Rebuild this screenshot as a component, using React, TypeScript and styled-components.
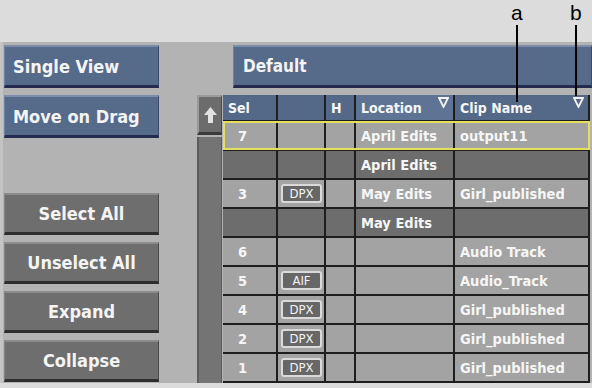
import styled, { createGlobalStyle } from 'styled-components'

const GlobalStyle = createGlobalStyle`
  html, body {
    margin: 0;
    padding: 0;
  }
  body {
    background: #dcdcdc;
    overflow: hidden;
    font-family: "DejaVu Sans Condensed", "DejaVu Sans", sans-serif;
  }
`

const Screen = styled.div`
  position: relative;
  width: 592px;
  height: 388px;
  padding-top: 42px;
  box-sizing: border-box;
  background: #dcdcdc;
`

const Panel = styled.div`
  height: 341px;
  box-sizing: border-box;
  background: #b3b3b3;
  border-left: 3px solid #c4c4c4;
  padding: 3px 0 0 1px;
  display: grid;
  grid-template-columns: 155px 1fr;
  column-gap: 38px;
  overflow: hidden;
`

const LeftColumn = styled.div`
  display: flex;
  flex-direction: column;
  gap: 7px;
`

const BlueButton = styled.div`
  height: 43px;
  box-sizing: border-box;
  background: #566a8a;
  border-top: 2px solid #7b8dab;
  border-left: 1px solid #6f82a1;
  border-right: 1px solid #3c4969;
  border-bottom: 3px solid #252a50;
  color: #f4f4f4;
  font-size: 18px;
  font-weight: bold;
  display: flex;
  align-items: center;
  padding-left: 8px;
  white-space: nowrap;
`

const GrayButton = styled.div<{ $first?: boolean }>`
  height: 42px;
  box-sizing: border-box;
  margin-top: ${(p) => (p.$first ? '48px' : '0')};
  background: #6e6e6e;
  border-top: 2px solid #8c8c8c;
  border-left: 1px solid #838383;
  border-right: 1px solid #4a4a4a;
  border-bottom: 3px solid #2e2e2e;
  color: #f4f4f4;
  font-size: 18px;
  font-weight: bold;
  display: flex;
  align-items: center;
  justify-content: center;
`

const RightColumn = styled.div`
  display: flex;
  flex-direction: column;
  gap: 7px;
  min-width: 0;
`

const TitleBar = styled(BlueButton)`
  margin-left: 36px;
  padding-left: 9px;
  font-size: 17px;
`

const ListArea = styled.div`
  display: flex;
  flex: 1;
  min-height: 0;
`

const ScrollColumn = styled.div`
  width: 25px;
  display: flex;
  flex-direction: column;
  gap: 2px;
`

const UpButton = styled.div`
  height: 40px;
  box-sizing: border-box;
  background: #6c6c6c;
  border-top: 2px solid #9a9a9a;
  border-left: 2px solid #9a9a9a;
  border-bottom: 3px solid #3a3a3a;
  border-right: 1px solid #4a4a4a;
  display: flex;
  align-items: center;
  justify-content: center;
`

const Track = styled.div`
  flex: 1;
  background: #747474;
  border-left: 2px solid #5c5c5c;
  border-right: 1px solid #5c5c5c;
`

const Table = styled.div`
  margin-left: 1px;
  display: flex;
  flex-direction: column;
  gap: 2px;
  background: #1e1e1e;
  align-self: flex-start;
  padding: 0 2px 2px 0;
`

const Row = styled.div<{ $selected?: boolean }>`
  position: relative;
  display: grid;
  grid-template-columns: 53px 46px 28px 97px 133px;
  column-gap: 2px;
  height: 27px;
  &::after {
    content: '';
    display: ${(p) => (p.$selected ? 'block' : 'none')};
    position: absolute;
    top: -1px;
    left: 0;
    right: -2px;
    bottom: -1px;
    border: 2px solid #e4df5c;
    pointer-events: none;
  }
`

const HeaderRow = styled(Row)`
  height: 25px;
`

const HeadCell = styled.div<{ $light?: boolean }>`
  background: ${(p) => (p.$light ? '#5f7495' : '#546988')};
  color: #f6f6f6;
  font-size: 14px;
  font-weight: bold;
  display: flex;
  align-items: center;
  padding-left: 5px;
  padding-right: 4px;
  white-space: nowrap;
`

const Sort = styled.svg`
  align-self: flex-start;
  margin-top: 2px;
  margin-left: auto;
  flex-shrink: 0;
`

const Cell = styled.div<{ $dark?: boolean; $pad?: number }>`
  background: ${(p) => (p.$dark ? '#6d6d6d' : '#a3a3a3')};
  color: #f6f6f6;
  font-size: 14.5px;
  font-weight: bold;
  display: flex;
  align-items: center;
  padding-left: ${(p) => p.$pad ?? 5}px;
  white-space: nowrap;
  overflow: hidden;
`

const Badge = styled.span`
  width: 41px;
  height: 19px;
  box-sizing: border-box;
  border: 2px solid #dadada;
  border-radius: 3px;
  background: #676767;
  color: #f4f4f4;
  font-size: 13px;
  font-weight: normal;
  display: flex;
  align-items: center;
  justify-content: center;
`

const Callout = styled.div<{ $x: number; $y: number }>`
  position: absolute;
  top: ${(p) => p.$y}px;
  left: ${(p) => p.$x}px;
  font-family: "Liberation Sans", Arial, sans-serif;
  font-size: 21px;
  color: #000;
  line-height: 24px;
`

const Leader = styled.div<{ $x: number; $h: number }>`
  position: absolute;
  top: 25px;
  left: ${(p) => p.$x}px;
  width: 2px;
  height: ${(p) => p.$h}px;
  background: #000;
`

type Clip = {
  sel: string
  fmt?: string
  location: string
  name: string
  dark?: boolean
  selected?: boolean
}

const clips: Clip[] = [
  { sel: '7', location: 'April Edits', name: 'output11', selected: true },
  { sel: '', location: 'April Edits', name: '', dark: true },
  { sel: '3', fmt: 'DPX', location: 'May Edits', name: 'Girl_published' },
  { sel: '', location: 'May Edits', name: '', dark: true },
  { sel: '6', location: '', name: 'Audio Track' },
  { sel: '5', fmt: 'AIF', location: '', name: 'Audio_Track' },
  { sel: '4', fmt: 'DPX', location: '', name: 'Girl_published' },
  { sel: '2', fmt: 'DPX', location: '', name: 'Girl_published' },
  { sel: '1', fmt: 'DPX', location: '', name: 'Girl_published' },
]

const SortIcon = () => (
  <Sort width="11" height="11" viewBox="0 0 11 11">
    <polygon points="1,1 10,1 5.5,10" fill="none" stroke="#f4f4f4" strokeWidth="1.8" />
  </Sort>
)

const App = () => {
  return (
    <Screen>
      <GlobalStyle />
      <Panel>
        <LeftColumn>
          <BlueButton>Single View</BlueButton>
          <BlueButton>Move on Drag</BlueButton>
          <GrayButton $first>Select All</GrayButton>
          <GrayButton>Unselect All</GrayButton>
          <GrayButton>Expand</GrayButton>
          <GrayButton>Collapse</GrayButton>
        </LeftColumn>
        <RightColumn>
          <TitleBar>Default</TitleBar>
          <ListArea>
            <ScrollColumn>
              <UpButton>
                <svg width="13" height="16" viewBox="0 0 13 16">
                  <polygon points="6.5,0 13,8 9,8 9,16 4,16 4,8 0,8" fill="#e2e2e2" />
                </svg>
              </UpButton>
              <Track />
            </ScrollColumn>
            <Table>
              <HeaderRow>
                <HeadCell>Sel</HeadCell>
                <HeadCell />
                <HeadCell>H</HeadCell>
                <HeadCell $light>
                  Location
                  <SortIcon />
                </HeadCell>
                <HeadCell>
                  Clip Name
                  <SortIcon />
                </HeadCell>
              </HeaderRow>
              {clips.map((c, i) => (
                <Row key={i} $selected={c.selected}>
                  <Cell $dark={c.dark} $pad={15}>{c.sel}</Cell>
                  <Cell $dark={c.dark} $pad={3}>{c.fmt && <Badge>{c.fmt}</Badge>}</Cell>
                  <Cell $dark={c.dark} />
                  <Cell $dark={c.dark}>{c.location}</Cell>
                  <Cell $dark={c.dark}>{c.name}</Cell>
                </Row>
              ))}
            </Table>
          </ListArea>
        </RightColumn>
      </Panel>
      <Callout $x={511} $y={1}>a</Callout>
      <Leader $x={516} $h={77} />
      <Callout $x={570} $y={1}>b</Callout>
      <Leader $x={575} $h={71} />
    </Screen>
  )
}

export default App
